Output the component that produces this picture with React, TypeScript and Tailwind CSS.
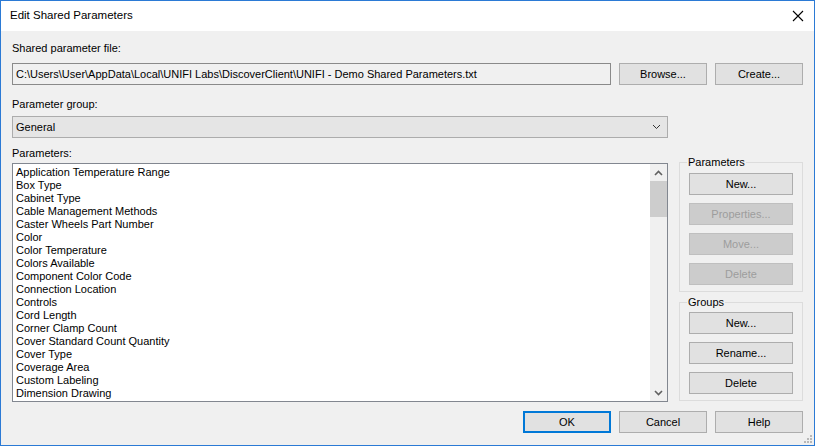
import React from 'react';

const parameterNames = [
  "Application Temperature Range",
  "Box Type",
  "Cabinet Type",
  "Cable Management Methods",
  "Caster Wheels Part Number",
  "Color",
  "Color Temperature",
  "Colors Available",
  "Component Color Code",
  "Connection Location",
  "Controls",
  "Cord Length",
  "Corner Clamp Count",
  "Cover Standard Count Quantity",
  "Cover Type",
  "Coverage Area",
  "Custom Labeling",
  "Dimension Drawing",
];

type DialogButtonProps = {
  label: string;
  disabled?: boolean;
  isDefault?: boolean;
  wide?: boolean;
};

const DialogButton = ({ label, disabled = false, isDefault = false, wide = false }: DialogButtonProps) => {
  const tone = disabled
    ? "bg-[#cccccc] border border-[#bfbfbf] text-[#9d9d9d]"
    : isDefault
      ? "bg-[#e1e1e1] border-2 border-[#0078d7] text-black"
      : "bg-[#e1e1e1] border border-[#adadad] text-black";
  return (
    <button
      type="button"
      disabled={disabled}
      className={`h-[22px] ${wide ? "w-full" : "w-[88px]"} shrink-0 flex items-center justify-center leading-none ${tone}`}
    >
      {label}
    </button>
  );
};

type GroupBoxProps = {
  title: string;
  children: React.ReactNode;
  contentTop: string;
};

const GroupBox = ({ title, children, contentTop }: GroupBoxProps) => {
  return (
    <fieldset className="border border-[#dcdcdc] px-[9px] pb-[6px]">
      <legend className="ml-[-2px] px-[1px] h-[13px] leading-[13px] text-black">{title}</legend>
      <div className={`flex flex-col gap-[8px] ${contentTop}`}>{children}</div>
    </fieldset>
  );
};

const Chevron = ({ up = false, color = "#606060" }: { up?: boolean; color?: string }) => (
  <svg width="9" height="6" viewBox="0 0 9 6">
    <path
      d={up ? "M1 5 L4.5 1.5 L8 5" : "M1 1 L4.5 4.5 L8 1"}
      fill="none"
      stroke={color}
      strokeWidth={color === "#606060" ? 1.6 : 1}
    />
  </svg>
);

export default function App() {
  return (
    <div className="w-[815px] h-[446px] border border-[#2b7ad5] bg-[#f0f0f0] flex flex-col text-[11px] text-black font-['Segoe_UI','Liberation_Sans',Arial,sans-serif] relative overflow-hidden">
      {/* Title bar */}
      <div className="h-[30px] bg-white flex items-center justify-between pl-[9px] pr-[10px] shrink-0">
        <span className="text-[11.5px] text-black">Edit Shared Parameters</span>
        <svg width="12" height="12" viewBox="0 0 12 12">
          <path d="M1 1 L11 11 M11 1 L1 11" stroke="#000" strokeWidth="1.1" fill="none" />
        </svg>
      </div>

      {/* Body */}
      <div className="flex flex-col pl-[11px] pr-[11px] pt-[10px]">
        <div className="h-[15px] leading-[15px]">Shared parameter file:</div>
        <div className="mt-[7px] flex gap-[8px]">
          <div className="h-[22px] flex-1 border border-[#8a8a8a] bg-[#f0f0f0] flex items-center pl-[3px] whitespace-nowrap overflow-hidden">
            C:\Users\User\AppData\Local\UNIFI Labs\DiscoverClient\UNIFI - Demo Shared Parameters.txt
          </div>
          <DialogButton label="Browse..." />
          <DialogButton label="Create..." />
        </div>

        <div className="mt-[12px] h-[15px] leading-[15px]">Parameter group:</div>
        <div className="mt-[4px] w-[656px] h-[22px] border border-[#acacac] bg-[#e5e5e5] flex items-center justify-between pl-[3px] pr-[6px]">
          <span>General</span>
          <Chevron color="#333333" />
        </div>

        <div className="mt-[8px] flex gap-[11px]">
          <div className="flex flex-col w-[656px]">
            <div className="h-[15px] leading-[15px]">Parameters:</div>
            <div className="mt-[2px] h-[239px] border border-[#828790] bg-white flex">
              <div className="flex-1 overflow-hidden pl-[3px] pt-[2px]">
                {parameterNames.map((name) => (
                  <div key={name} className="h-[13px] leading-[13px] whitespace-nowrap">
                    {name}
                  </div>
                ))}
              </div>
              <div className="w-[17px] bg-[#f0f0f0] flex flex-col">
                <div className="h-[17px] flex items-center justify-center">
                  <Chevron up />
                </div>
                <div className="h-[36px] bg-[#cdcdcd]" />
                <div className="flex-1" />
                <div className="h-[17px] flex items-center justify-center">
                  <Chevron />
                </div>
              </div>
            </div>
          </div>

          <div className="w-[124px] mt-[10px] flex flex-col gap-[4px]">
            <GroupBox title="Parameters" contentTop="mt-[4px]">
              <DialogButton label="New..." wide />
              <DialogButton label="Properties..." disabled wide />
              <DialogButton label="Move..." disabled wide />
              <DialogButton label="Delete" disabled wide />
            </GroupBox>
            <GroupBox title="Groups" contentTop="mt-[3px]">
              <DialogButton label="New..." wide />
              <DialogButton label="Rename..." wide />
              <DialogButton label="Delete" wide />
            </GroupBox>
          </div>
        </div>

        <div className="mt-[9px] flex justify-end gap-[8px]">
          <DialogButton label="OK" isDefault />
          <DialogButton label="Cancel" />
          <DialogButton label="Help" />
        </div>
      </div>

      {/* Resize grip */}
      <svg className="absolute right-[2px] bottom-[2px]" width="9" height="9" viewBox="0 0 9 9">
        <rect x="7" y="1" width="2" height="2" fill="#b8b8b8" />
        <rect x="4" y="4" width="2" height="2" fill="#b8b8b8" />
        <rect x="7" y="4" width="2" height="2" fill="#b8b8b8" />
        <rect x="1" y="7" width="2" height="2" fill="#b8b8b8" />
        <rect x="4" y="7" width="2" height="2" fill="#b8b8b8" />
        <rect x="7" y="7" width="2" height="2" fill="#b8b8b8" />
      </svg>
    </div>
  );
}
